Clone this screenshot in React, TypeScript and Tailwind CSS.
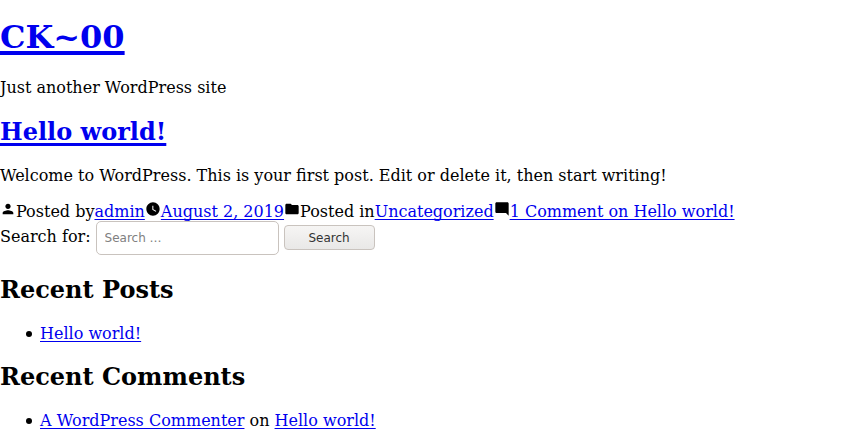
import React from 'react';

const link = 'text-[#0000ee] underline decoration-1 underline-offset-[2px] [text-decoration-skip-ink:none]';
const heading = 'text-[24px] leading-[28px] font-bold';
const headingLink = 'text-[#0000ee] underline [text-decoration-skip-ink:none]';

function Icon({ d }: { d: string }) {
  return (
    <svg className="inline-block align-baseline" width="16" height="16" viewBox="0 0 24 24" fill="currentColor">
      <path d={d} />
    </svg>
  );
}

const person = 'M12 12c2.21 0 4-1.79 4-4s-1.79-4-4-4-4 1.79-4 4 1.79 4 4 4zm0 2c-2.67 0-8 1.34-8 4v2h16v-2c0-2.66-5.33-4-8-4z';
const folder = 'M10 4H4c-1.1 0-1.99.9-1.99 2L2 18c0 1.1.9 2 2 2h16c1.1 0 2-.9 2-2V8c0-1.1-.9-2-2-2h-8l-2-2z';
const comment = 'M21.99 4c0-1.1-.89-2-1.99-2H4c-1.1 0-2 .9-2 2v12c0 1.1.9 2 2 2h14l4 4-.01-18z';
const watch = 'M12 2C6.5 2 2 6.5 2 12s4.500 10 10 10 10-4.500 10-10S17.500 2 12 2zm4.200 14.200L11 13V7h1.500v5.200l4.500 2.700-.8 1.300z';

function Item({ children }: { children: React.ReactNode }) {
  return (
    <li className="flex items-center">
      <span className="mr-[8px] ml-[26px] h-[6px] w-[6px] rounded-full bg-black" />
      <span>{children}</span>
    </li>
  );
}

export default function App() {
  return (
    <div className="h-[439px] overflow-hidden bg-white font-['DejaVu_Serif',serif] text-[16px] leading-[19px] text-black">
      <h1 className="pt-[18px] text-[32px] leading-[38px] font-bold"><a href="#" className={`${headingLink} decoration-[4px] underline-offset-[3px]`}>CK~00</a></h1>
      <p className="mt-[22px]">Just another WordPress site</p>
      <h2 className={`mt-[21px] ${heading}`}><a href="#" className={`${headingLink} decoration-[3px] underline-offset-[3px]`}>Hello world!</a></h2>
      <p className="mt-[20px]">Welcome to WordPress. This is your first post. Edit or delete it, then start writing!</p>
      <footer className="mt-[16px] h-[20px] leading-[20px] whitespace-nowrap">
        <Icon d={person} />Posted by<a href="#" className={link}>admin</a><Icon d={watch} /><a href="#" className={link}>August 2, 2019</a><Icon d={folder} />Posted in<a href="#" className={link}>Uncategorized</a><Icon d={comment} /><a href="#" className={link}>1 Comment on Hello world!</a>
      </footer>
      <form className="flex h-[35px]" onSubmit={(e) => e.preventDefault()}>
        <label className="mr-[5px] flex">
          <span className="mr-[5px] mt-[6px]">Search for:</span>
          <input type="search" placeholder="Search …" className="h-[34px] w-[183px] rounded-[5px] border border-[#c9c3be] px-[8px] font-['DejaVu_Sans',sans-serif] text-[12px] placeholder:text-[#808080]" />
        </label>
        <button className="mt-[4px] h-[25px] w-[91px] rounded-[4px] border border-[#c9c3be] bg-linear-to-b from-[#f6f5f4] to-[#e9e8e7] font-['DejaVu_Sans',sans-serif] text-[12px] leading-[14px] text-[#333]">Search</button>
      </form>
      <h2 className={`mt-[20px] ${heading}`}>Recent Posts</h2>
      <ul className="mt-[20px]"><Item><a href="#" className={link}>Hello world!</a></Item></ul>
      <h2 className={`mt-[20px] ${heading}`}>Recent Comments</h2>
      <ul className="mt-[20px]"><Item><a href="#" className={link}>A WordPress Commenter</a> on <a href="#" className={link}>Hello world!</a></Item></ul>
    </div>
  );
}
